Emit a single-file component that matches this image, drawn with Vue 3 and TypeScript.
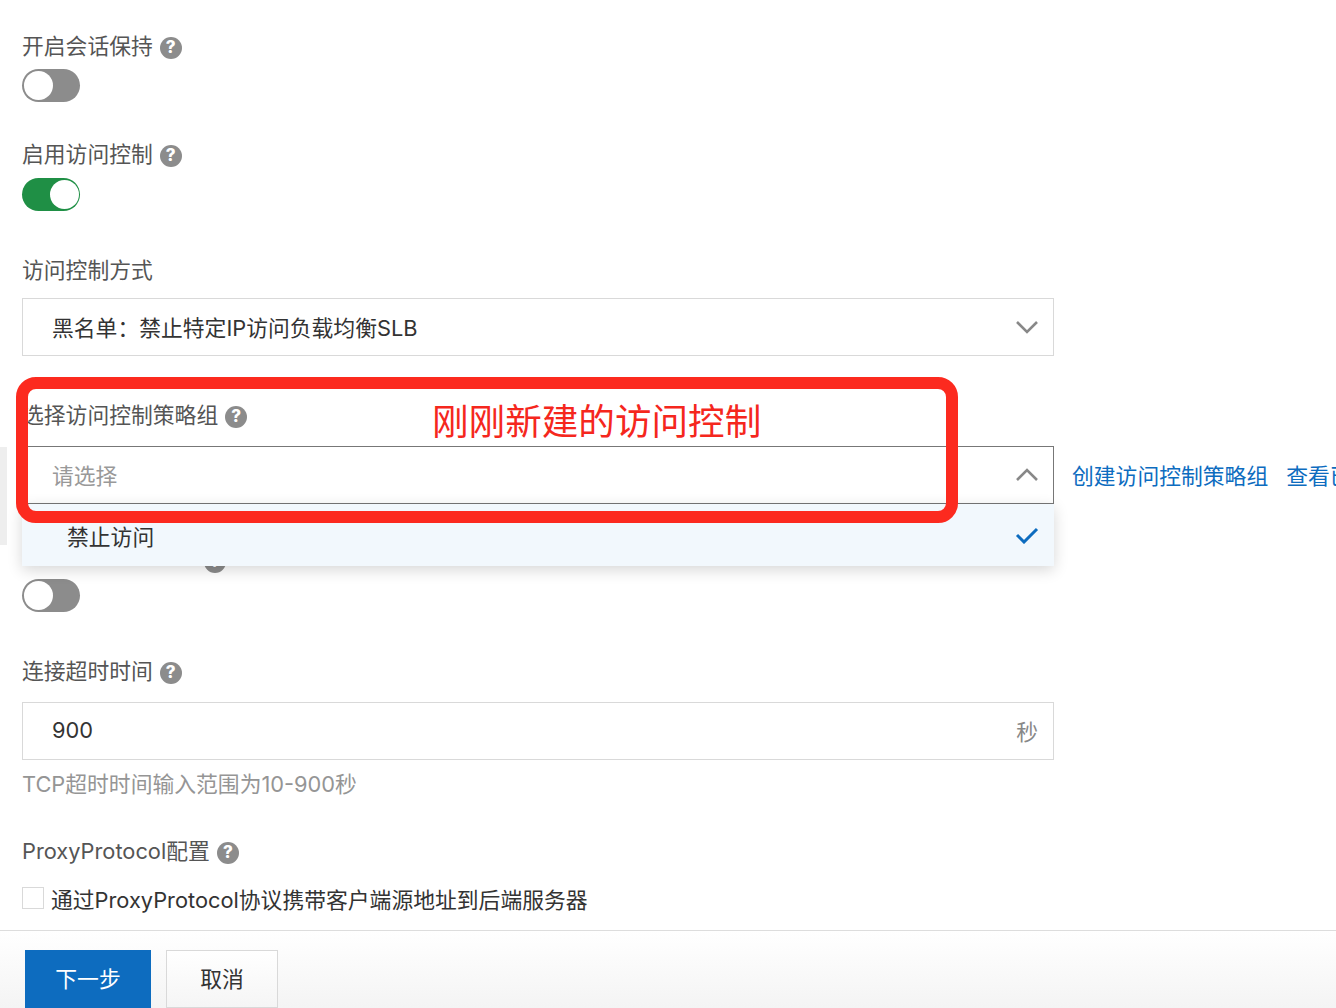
<script setup lang="ts">
const helpText = 'TCP超时时间输入范围为10-900秒'
</script>

<template>
  <div class="page">
    <div class="side-tab"></div>

    <main class="form">
      <div class="label first">开启会话保持<span class="help">?</span></div>
      <div class="switch"><span class="knob"></span></div>

      <div class="label gap-38">启用访问控制<span class="help">?</span></div>
      <div class="switch on second"><span class="knob"></span></div>

      <div class="label gap-45">访问控制方式</div>
      <div class="select mt-12">
        <span class="value">黑名单：禁止特定IP访问负载均衡SLB</span>
        <svg class="chevron" width="24" height="14" viewBox="0 0 24 14" fill="none" stroke="#888" stroke-width="2.6">
          <path d="M2 2l10 10L22 2" />
        </svg>
      </div>

      <div class="label gap-45 label-acl">选择访问控制策略组<span class="help">?</span></div>
      <div class="select-row mt-15">
        <div class="select open">
          <span class="value placeholder">请选择</span>
          <svg class="chevron" width="24" height="14" viewBox="0 0 24 14" fill="none" stroke="#888" stroke-width="2.6">
            <path d="M2 12L12 2l10 10" />
          </svg>
          <div class="dropdown">
            <span>禁止访问</span>
            <svg width="24" height="18" viewBox="0 0 24 18" fill="none" stroke="#0d6cbf" stroke-width="3">
              <path d="M2 9l7 7L22 3" />
            </svg>
          </div>
        </div>
        <a class="link">创建访问控制策略组</a>
        <a class="link">查看已创建</a>
      </div>

      <div class="label gap-42 hidden-label"><span class="help">?</span></div>
      <div class="switch third"><span class="knob"></span></div>

      <div class="label gap-45">连接超时时间<span class="help">?</span></div>
      <div class="select mt-15">
        <span class="value">900</span>
        <span class="value unit">秒</span>
      </div>
      <div class="hint">{{ helpText }}</div>

      <div class="label gap-38">ProxyProtocol配置<span class="help">?</span></div>
      <label class="check">
        <span class="box"></span>
        <span>通过ProxyProtocol协议携带客户端源地址到后端服务器</span>
      </label>
    </main>

    <footer class="footer">
      <button class="btn primary">下一步</button>
      <button class="btn">取消</button>
    </footer>

    <div class="annotation">
      <span class="annotation-text">刚刚新建的访问控制</span>
    </div>
  </div>
</template>

<style>
body {
  background: #fff;
}
</style>

<style scoped>
.page {
  position: relative;
  width: 1336px;
  height: 1008px;
  overflow: hidden;
  display: flex;
  flex-direction: column;
  background: #fff;
  color: #555;
  font-family: Inter, "Noto Sans CJK SC", sans-serif;
  font-size: 21.8px;
}

.form {
  flex: 1;
  min-height: 0;
  padding: 32px 0 0 22px;
}

.label {
  display: flex;
  align-items: center;
  height: 30px;
  box-sizing: border-box;
  padding-bottom: 1px;
  line-height: 29px;
  color: #555;
  white-space: nowrap;
}

.help {
  display: inline-flex;
  align-items: center;
  justify-content: center;
  width: 22px;
  height: 22px;
  margin: 2px 0 0 7px;
  border-radius: 50%;
  background: #8c8c8c;
  color: #fff;
  font-size: 17px;
  font-weight: 800;
  line-height: 1;
}

.gap-38 { margin-top: 38px; }
.gap-42 { margin-top: 42px; }
.gap-45 { margin-top: 45px; }
.mt-12 { margin-top: 12px; }
.mt-15 { margin-top: 15px; }

.hidden-label .help {
  margin-left: 182px;
}

.switch {
  display: flex;
  align-items: center;
  justify-content: flex-start;
  width: 58px;
  height: 33px;
  margin-top: 7px;
  padding: 1.5px;
  box-sizing: border-box;
  border-radius: 17px;
  background: #8c8c8c;
}

.switch.on {
  justify-content: flex-end;
  background: #1f8f45;
}

.switch.second {
  margin-top: 8px;
}

.switch.third {
  margin-top: 3px;
}

.knob {
  width: 29px;
  height: 29px;
  border-radius: 50%;
  background: #fff;
}

.select-row {
  display: flex;
  align-items: center;
  width: 1400px;
}

.select {
  position: relative;
  display: flex;
  flex-shrink: 0;
  align-items: center;
  justify-content: space-between;
  width: 1032px;
  height: 58px;
  box-sizing: border-box;
  padding: 0 14px 0 29px;
  border: 1px solid #d9d9d9;
  background: #fff;
  color: #333;
}

.select.open {
  border-color: #777;
}

.value {
  margin-bottom: 2px;
}

.placeholder {
  color: #999;
}

.unit {
  color: #888;
  margin-right: 1px;
}

.dropdown {
  position: absolute;
  top: 57px;
  left: -1px;
  right: -1px;
  display: flex;
  align-items: center;
  justify-content: space-between;
  height: 62px;
  box-sizing: border-box;
  padding: 0 15px 0 45px;
  background: #f2f8fd;
  box-shadow: 0 4px 14px rgba(0, 0, 0, 0.16);
  color: #333;
  z-index: 2;
}

.link {
  flex-shrink: 0;
  margin-left: 18px;
  margin-bottom: 2px;
  color: #0d6cbf;
  white-space: nowrap;
}

.hint {
  height: 30px;
  margin-top: 9px;
  line-height: 30px;
  color: #959595;
}

.check {
  display: flex;
  align-items: center;
  height: 30px;
  margin-top: 16px;
  color: #333;
}

.box {
  width: 22px;
  height: 22px;
  margin-right: 7px;
  box-sizing: border-box;
  border: 1px solid #d9d9d9;
  background: #fff;
}

.footer {
  display: flex;
  gap: 15px;
  flex-shrink: 0;
  height: 78px;
  box-sizing: border-box;
  padding: 19px 0 0 25px;
  border-top: 1px solid #ddd;
  background: linear-gradient(#fff, #f4f4f4);
}

.btn {
  width: 112px;
  height: 58px;
  box-sizing: border-box;
  padding: 0 0 3px;
  border: 1px solid #d9d9d9;
  background: linear-gradient(#fff, #f5f5f5);
  color: #333;
  font-family: inherit;
  font-size: 21.8px;
}

.btn.primary {
  width: 126px;
  border: none;
  background: #0d6cbf;
  color: #fff;
}

.side-tab {
  position: absolute;
  top: 447px;
  left: 0;
  width: 7px;
  height: 98px;
  background: #eee;
}

.annotation {
  position: absolute;
  top: 377px;
  left: 16px;
  width: 942px;
  height: 146px;
  box-sizing: border-box;
  border: 12px solid #fc2a1f;
  border-radius: 20px;
  z-index: 3;
}

.annotation-text {
  position: absolute;
  top: 9px;
  left: 404px;
  color: #f5271d;
  font-size: 36.6px;
  line-height: 48px;
  white-space: nowrap;
}
</style>
